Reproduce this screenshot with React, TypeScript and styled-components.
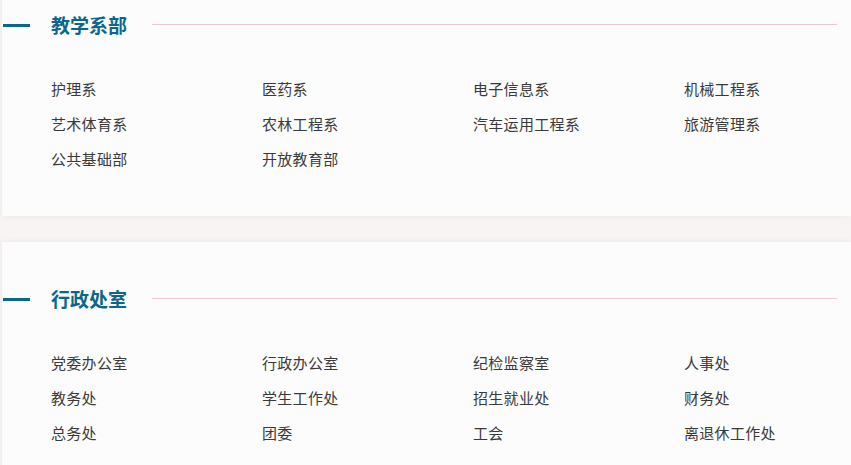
import React from "react";
import styled, { createGlobalStyle } from "styled-components";

const Global = createGlobalStyle`
  html, body { margin: 0; padding: 0; background: #f8f4f3; }
  body { font-family: "Noto Sans CJK SC", "Noto Sans", sans-serif; overflow: hidden; }
`;

const Page = styled.div`
  margin-top: -32px;
  display: flex;
  flex-direction: column;
  gap: 26px;
  padding-left: 2px;
`;

const Card = styled.section`
  background: #fcfcfc;
  box-shadow: 0 0 6px rgba(220, 205, 205, 0.35);
  padding: 44px 0 46px 0;
`;

const Header = styled.div`
  display: flex;
  align-items: center;
  height: 26px;
`;

const Bar = styled.span`
  width: 27px;
  height: 3px;
  margin-left: 1px;
  background: #0b6689;
  flex: none;
`;

const Title = styled.h2`
  margin: 0 0 0 21px;
  font-size: 19px;
  font-weight: 700;
  color: #0b6689;
  line-height: 26px;
  flex: none;
`;

const Rule = styled.span`
  flex: 1;
  height: 1px;
  background: #efc8d0;
  margin: -2px 14px 0 25px;
`;

const Grid = styled.ul`
  list-style: none;
  margin: 40px 0 0 0;
  padding: 0 0 0 49px;
  display: grid;
  grid-template-columns: repeat(3, 211px) 1fr;
  row-gap: 13px;
`;

const Item = styled.li`
  font-size: 15px;
  line-height: 22px;
  letter-spacing: 0.3px;
  color: #3a3a3a;
  white-space: nowrap;
`;

const sections = [
  {
    title: "教学系部",
    items: [
      "护理系", "医药系", "电子信息系", "机械工程系",
      "艺术体育系", "农林工程系", "汽车运用工程系", "旅游管理系",
      "公共基础部", "开放教育部",
    ],
  },
  {
    title: "行政处室",
    items: [
      "党委办公室", "行政办公室", "纪检监察室", "人事处",
      "教务处", "学生工作处", "招生就业处", "财务处",
      "总务处", "团委", "工会", "离退休工作处",
    ],
  },
];

export default function App() {
  return (
    <>
      <Global />
      <Page>
        {sections.map((s) => (
          <Card key={s.title}>
            <Header>
              <Bar />
              <Title>{s.title}</Title>
              <Rule />
            </Header>
            <Grid>
              {s.items.map((it) => (
                <Item key={it}>{it}</Item>
              ))}
            </Grid>
          </Card>
        ))}
      </Page>
    </>
  );
}
